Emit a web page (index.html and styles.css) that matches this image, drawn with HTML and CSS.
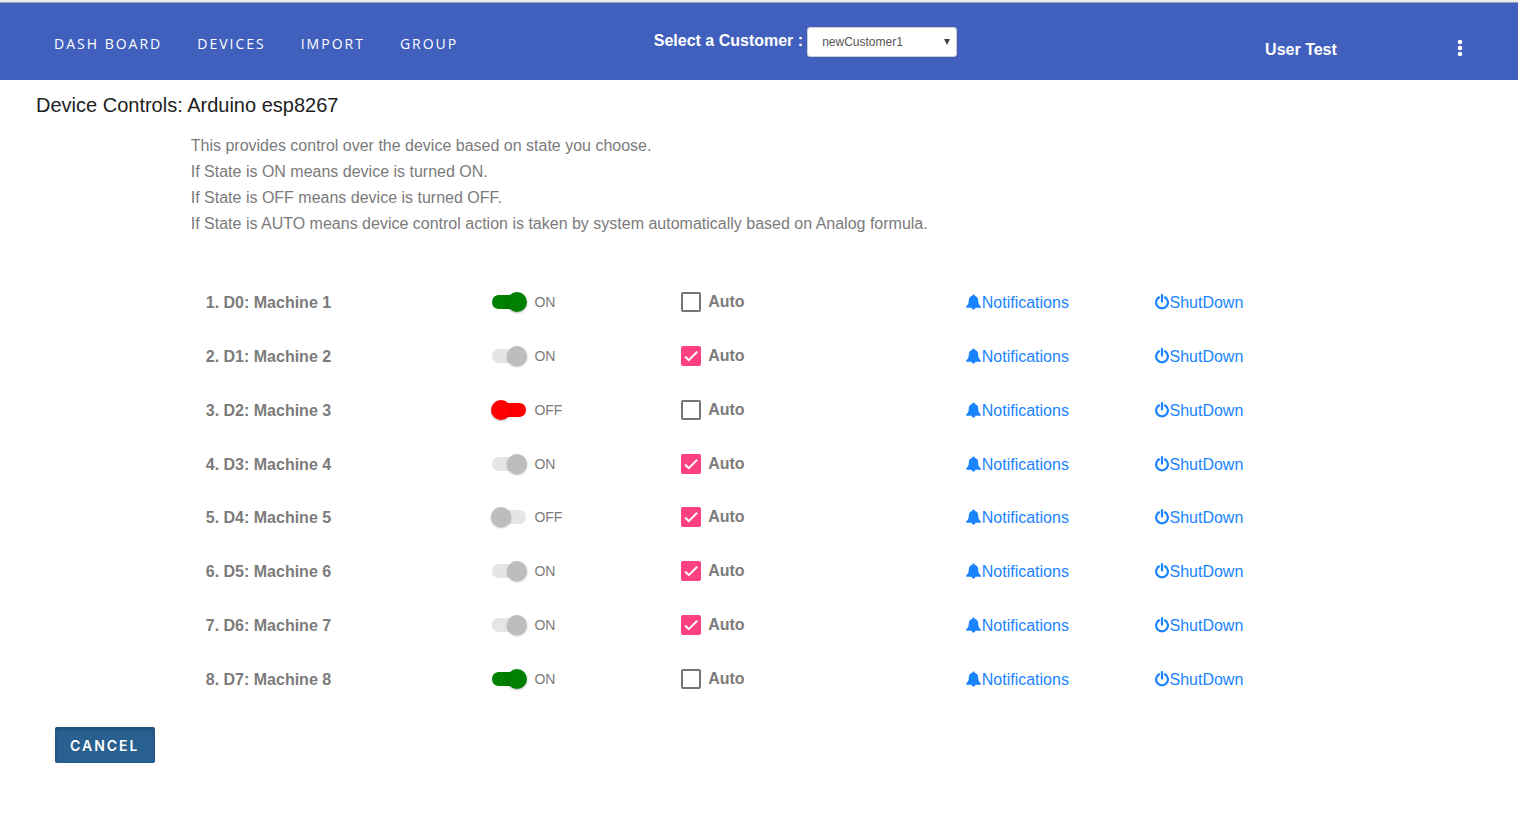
FILE: index.html
```html
<!DOCTYPE html>
<html lang="en">
<head>
<meta charset="utf-8">
<title>Device Controls</title>
<link rel="stylesheet" href="styles.css">
</head>
<body>
<svg class="sprite" aria-hidden="true">
  <symbol id="bell" viewBox="0 0 16 16"><path d="M8 0a1.300 1.300 0 0 0-1.300 1.300C4.200 1.900 3 3.800 3 6.200 3 9.800 2 11.400.3 12.600V14h15.400v-1.400C14 11.400 13 9.800 13 6.200 13 3.800 11.800 1.900 9.300 1.300A1.300 1.300 0 0 0 8 0zM6 14h4a2 2 0 0 1-4 0z"/></symbol>
  <symbol id="power" viewBox="0 0 14 16"><path d="M4 3.300a5.900 5.900 0 1 0 6 0M7 1.100v6.500" fill="none" stroke="currentColor" stroke-width="2.200" stroke-linecap="round"/></symbol>
  <symbol id="tick" viewBox="0 0 24 24"><path d="M4.100 12.700 9 17.600 20.300 6.300" fill="none" stroke="#fff" stroke-width="2.600"/></symbol>
</svg>
<header class="topbar">
  <nav class="nav">
    <a href="#">DASH BOARD</a>
    <a href="#">DEVICES</a>
    <a href="#">IMPORT</a>
    <a href="#">GROUP</a>
  </nav>
  <div class="customer">
    <label for="customer">Select a Customer :</label>
    <span class="select">
      <select id="customer"><option>newCustomer1</option></select>
      <svg viewBox="0 0 8 8" aria-hidden="true"><path d="M1 1h6L4 7z"/></svg>
    </span>
  </div>
  <div class="account">
    <span>User Test</span>
    <button class="more" type="button" aria-label="Menu"><svg viewBox="0 0 6 18"><circle cx="3" cy="3" r="2.300"/><circle cx="3" cy="9" r="2.300"/><circle cx="3" cy="15" r="2.300"/></svg></button>
  </div>
</header>
<main>
  <h1 class="title">Device Controls: Arduino esp8267</h1>
  <div class="content">
    <p class="intro">This provides control over the device based on state you choose.<br>
    If State is ON means device is turned ON.<br>
    If State is OFF means device is turned OFF.<br>
    If State is AUTO means device control action is taken by system automatically based on Analog formula.</p>
    <div class="devices" id="devices"></div>
  </div>
  <button class="cancel" type="button">CANCEL</button>
</main>
<script src="app.js"></script>
</body>
</html>
```
FILE: styles.css
```css
* { box-sizing: border-box; }
body {
  margin: 0;
  background: #fff;
  color: #7b7b7b;
  font: 16px/26px "Liberation Sans", Arial, sans-serif;
}
.sprite { display: none; }
a { text-decoration: none; }

.topbar {
  display: grid;
  grid-template-columns: 43% 41% 1fr;
  height: 80px;
  border-top: 2px solid #ececec;
  background: #415fbd;
  box-shadow: inset 0 1px #9c9ca8;
  color: #fff;
}
.nav {
  display: flex;
  gap: 35px;
  padding: 29px 0 0 54px;
}
.nav a {
  color: #fff;
  font: 14px/26px "Open Sans", sans-serif;
  letter-spacing: 2px;
}
.customer {
  display: flex;
  align-items: flex-start;
  gap: 4px;
  padding: 25px 0 0 1px;
  font-weight: bold;
}
.customer label { line-height: 28px; }
.select { display: grid; align-items: center; }
.select select, .select svg { grid-area: 1 / 1; }
.select select {
  appearance: none;
  width: 150px;
  height: 30px;
  padding: 0 14px;
  border: 1px solid #ccc;
  border-radius: 3px;
  background: #fff;
  color: #555;
  font: 12px "Liberation Sans", Arial, sans-serif;
}
.select svg {
  justify-self: end;
  width: 8px;
  height: 8px;
  margin-right: 6px;
  fill: #444;
  pointer-events: none;
}
.account {
  display: flex;
  justify-content: space-between;
  align-items: flex-start;
  padding: 34px 55px 0 0;
  margin-left: -10px;
  font-weight: bold;
  line-height: 28px;
}
.more {
  padding: 3px 0 0;
  border: 0;
  background: none;
}
.more svg { display: block; width: 6px; height: 18px; fill: #fff; }

.title {
  margin: 0;
  padding: 9px 36px 0;
  color: #212121;
  font-size: 20px;
  font-weight: normal;
  line-height: 32px;
}
.content { width: 75%; margin: 0 auto; }
.intro { margin: 12px 0 38px; padding-left: 1px; }
.devices {
  display: grid;
  grid-auto-rows: 1fr;
  min-height: 431px;
}
.row {
  display: grid;
  grid-template-columns: 3fr 2fr 3fr 2fr 2fr;
  align-items: center;
}
.row > * { margin-left: 17px; }
.row > .name { margin-left: 16px; font-weight: bold; }
.name, .link { line-height: 24px; padding-top: 2px; }
.switch, .auto {
  display: flex;
  align-items: center;
  gap: 7px;
}
.switch { font-size: 14px; }
.switch input {
  appearance: none;
  display: flex;
  align-items: center;
  width: 36px;
  height: 14px;
  margin: 0;
  border-radius: 8px;
  border: 0 solid transparent;
  border-width: 0 1px;
  background: red padding-box;
  color: red;
}
.switch input::before {
  content: "";
  flex: none;
  width: 20px;
  height: 20px;
  margin-left: -1px;
  border-radius: 50%;
  background: currentColor;
  box-shadow: 0 1px 2px rgba(0, 0, 0, .3);
}
.switch input:checked {
  justify-content: flex-end;
  background-color: green;
  color: green;
}
.switch input:checked::before { margin-right: -1px; }
.switch input:disabled { background-color: #e5e5e5; color: #bdbdbd; }
.auto { font-weight: bold; }
.box { display: grid; place-items: center; }
.box input, .box svg { grid-area: 1 / 1; }
.box input {
  appearance: none;
  width: 20px;
  height: 20px;
  margin: 0;
  border: 2px solid #757575;
  border-radius: 2px;
}
.box input:checked { border-color: #ff4081; background: #ff4081; }
.box svg { width: 18px; height: 18px; visibility: hidden; pointer-events: none; }
.box input:checked + svg { visibility: visible; }
.link {
  display: flex;
  align-items: center;
  justify-self: start;
  gap: 1px;
  color: #1a84ff;
}
.link svg { width: 15px; height: 16px; margin-bottom: 2px; fill: currentColor; }
.row > .shutdown { margin-left: 16px; }
.link .power { width: 14px; }
.cancel {
  display: block;
  margin: 21px 55px;
  padding: 0 15px;
  height: 36px;
  border: 0;
  border-radius: 2px;
  background: #286090;
  box-shadow: inset 0 2px 4px rgba(0, 0, 0, .2);
  color: #fff;
  font: 600 14px Inter, sans-serif;
  letter-spacing: 2px;
}
```
FILE: app.js
```js
const devices = [
  { on: true, auto: false },
  { on: true, auto: true },
  { on: false, auto: false },
  { on: true, auto: true },
  { on: false, auto: true },
  { on: true, auto: true },
  { on: true, auto: true },
  { on: true, auto: false }
];

document.getElementById("devices").innerHTML = devices.map((d, i) => `
  <div class="row">
    <span class="name">${i + 1}. D${i}: Machine ${i + 1}</span>
    <label class="switch"><input type="checkbox" role="switch" ${d.on ? "checked" : ""} ${d.auto ? "disabled" : ""}>${d.on ? "ON" : "OFF"}</label>
    <label class="auto"><span class="box"><input type="checkbox" ${d.auto ? "checked" : ""}><svg aria-hidden="true"><use href="#tick"/></svg></span>Auto</label>
    <a class="link" href="#"><svg aria-hidden="true"><use href="#bell"/></svg>Notifications</a>
    <a class="link shutdown" href="#"><svg class="power" aria-hidden="true"><use href="#power"/></svg>ShutDown</a>
  </div>`).join("");
```
